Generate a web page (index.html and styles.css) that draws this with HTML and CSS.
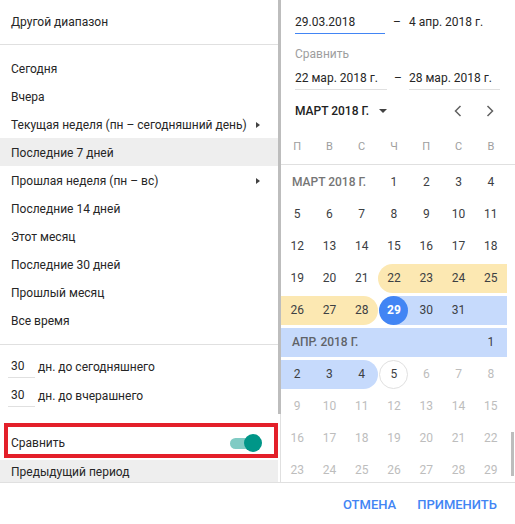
FILE: index.html
```html
<!DOCTYPE html>
<html lang="ru">
<head>
<meta charset="utf-8">
<title>Диапазон дат</title>
<link rel="stylesheet" href="styles.css">
</head>
<body>
<div class="picker">
  <div class="main">
    <aside class="presets">
      <div class="preset-list">
        <div class="custom">Другой диапазон</div>
        <ul class="ranges">
          <li>Сегодня</li>
          <li>Вчера</li>
          <li class="has-sub">Текущая неделя (пн – сегодняшний день)<span class="tri"></span></li>
          <li class="active">Последние 7 дней</li>
          <li class="has-sub">Прошлая неделя (пн – вс)<span class="tri"></span></li>
          <li>Последние 14 дней</li>
          <li>Этот месяц</li>
          <li>Последние 30 дней</li>
          <li>Прошлый месяц</li>
          <li>Все время</li>
        </ul>
        <div class="relative">
          <div class="rel-row"><span class="num">30</span><span>дн. до сегодняшнего</span></div>
          <div class="rel-row"><span class="num">30</span><span>дн. до вчерашнего</span></div>
        </div>
        <div class="compare-box">
          <span>Сравнить</span>
          <span class="toggle"><span class="toggle-track"></span><span class="toggle-knob"></span></span>
        </div>
        <div class="prev">Предыдущий период</div>
      </div>
      <div class="vtrack"><div class="thumb left-thumb"></div></div>
    </aside>

    <section class="cal">
      <div class="date-row">
        <div class="field active-field">29.03.2018</div>
        <div class="dash">–</div>
        <div class="field plain">4 апр. 2018 г.</div>
      </div>
      <div class="cmp-label">Сравнить</div>
      <div class="date-row second">
        <div class="field">22 мар. 2018 г.</div>
        <div class="dash">–</div>
        <div class="field">28 мар. 2018 г.</div>
      </div>
      <div class="month-head">
        <span class="month-name">МАРТ 2018 Г.</span>
        <span class="caret"></span>
        <span class="nav">
          <svg width="8" height="12" viewBox="0 0 8 12"><path d="M6.5 1 L1.5 6 L6.5 11" fill="none" stroke="#616161" stroke-width="1.5"/></svg>
          <svg width="8" height="12" viewBox="0 0 8 12"><path d="M1.5 1 L6.5 6 L1.5 11" fill="none" stroke="#616161" stroke-width="1.5"/></svg>
        </span>
      </div>
      <div class="weekdays">
        <span>П</span><span>В</span><span>С</span><span>Ч</span><span>П</span><span>С</span><span>В</span>
      </div>
      <div class="cal-scroll">
        <div class="grid">
          <span class="mlabel">МАРТ 2018 Г.</span><span>1</span><span>2</span><span>3</span><span>4</span>
          <span>5</span><span>6</span><span>7</span><span>8</span><span>9</span><span>10</span><span>11</span>
          <span>12</span><span>13</span><span>14</span><span>15</span><span>16</span><span>17</span><span>18</span>
          <span>19</span><span>20</span><span>21</span><span class="y y-start">22</span><span class="y">23</span><span class="y">24</span><span class="y">25</span>
          <span class="y">26</span><span class="y">27</span><span class="y y-end">28</span><span class="sel-start"><i>29</i></span><span class="b">30</span><span class="b">31</span><span class="b"></span>
          <span class="mlabel b wide">АПР. 2018 Г.</span><span class="b">1</span>
          <span class="b">2</span><span class="b">3</span><span class="b b-end">4</span><span class="today"><i>5</i></span><span class="f">6</span><span class="f">7</span><span class="f">8</span>
          <span class="f">9</span><span class="f">10</span><span class="f">11</span><span class="f">12</span><span class="f">13</span><span class="f">14</span><span class="f">15</span>
          <span class="f">16</span><span class="f">17</span><span class="f">18</span><span class="f">19</span><span class="f">20</span><span class="f">21</span><span class="f">22</span>
          <span class="f">23</span><span class="f">24</span><span class="f">25</span><span class="f">26</span><span class="f">27</span><span class="f">28</span><span class="f">29</span>
        </div>
        <div class="vscroll"><div class="thumb right-thumb"></div></div>
      </div>
    </section>
  </div>
  <footer class="actions">
    <button class="btn">ОТМЕНА</button>
    <button class="btn">ПРИМЕНИТЬ</button>
  </footer>
</div>
</body>
</html>
```

FILE: styles.css
```css
* { box-sizing: border-box; }
html, body { margin: 0; padding: 0; background: #fff; }
body {
  font-family: Roboto, "Noto Sans", "DejaVu Sans", sans-serif;
  font-size: 12px;
  color: #262626;
}
.picker { width: 515px; height: 524px; display: flex; flex-direction: column; }
.main {
  height: 483px;
  display: flex;
  border-bottom: 1px solid #e0e0e0;
  overflow: hidden;
}

/* left presets */
.presets { width: 281px; display: flex; height: 482px; }
.preset-list { width: 278px; overflow: hidden; }
.vtrack {
  width: 3px;
  border-right: 1px solid #e0e0e0;
  position: relative;
}
.thumb { position: absolute; background: #bdbdbd; }
.left-thumb { left: 0; top: 0; width: 3px; height: 414px; }

.custom {
  height: 45px;
  line-height: 44px;
  padding-left: 11px;
  border-bottom: 1px solid #e0e0e0;
}
.ranges {
  list-style: none;
  margin: 0;
  padding: 9px 0 10px;
  border-bottom: 1px solid #e0e0e0;
}
.ranges li {
  height: 28px;
  line-height: 28px;
  padding: 1px 18px 0 11px;
  display: flex;
  align-items: center;
  justify-content: space-between;
}
.ranges li.active { background: #eeeeee; }
.tri {
  width: 0; height: 0;
  border-left: 4px solid #424242;
  border-top: 3.5px solid transparent;
  border-bottom: 3.5px solid transparent;
}
.relative { padding-top: 7px; }
.rel-row {
  height: 29px;
  display: flex;
  align-items: center;
}
.num {
  width: 27px;
  margin-left: 8px;
  margin-right: 3px;
  padding-left: 3px;
  height: 23px;
  line-height: 22px;
  border-bottom: 1px solid #e0e0e0;
}
.compare-box {
  margin: 13px 0 0 4px;
  width: 274px;
  height: 35px;
  border: 4px solid #e3202a;
  display: flex;
  align-items: center;
  justify-content: space-between;
  padding: 4px 12px 0 3px;
}
.toggle { position: relative; width: 32px; height: 18px; }
.toggle-track {
  position: absolute; left: 0; top: 4px;
  width: 26px; height: 11px; border-radius: 6px;
  background: #80cbc4;
}
.toggle-knob {
  position: absolute; right: 0; top: 0;
  width: 18px; height: 18px; border-radius: 50%;
  background: #009688;
}
.prev {
  margin-top: 2px;
  height: 28px;
  line-height: 24px;
  padding-left: 11px;
  background: #eeeeee;
}

/* calendar side */
.cal { width: 234px; padding-top: 11px; }
.date-row { display: flex; padding-left: 14px; }
.field {
  width: 91px;
  height: 23px;
  line-height: 22px;
  border-bottom: 1px solid #e0e0e0;
  white-space: nowrap;
}
.field.active-field { border-bottom-color: #4285f4; width: 90px; }
.field.plain { border-bottom-color: transparent; }
.dash { width: 24px; text-align: center; line-height: 22px; }
.second .field:first-child { width: 92px; }
.second .dash { width: 22px; }
.cmp-label {
  padding-left: 14px;
  margin-top: 12px;
  line-height: 16px;
  color: #9e9e9e;
}
.date-row.second { margin-top: 5px; }
.month-head {
  margin-top: 9px;
  height: 24px;
  display: flex;
  align-items: center;
  padding-left: 14px;
}
.month-name { font-weight: 500; color: #212121; }
.caret {
  margin-left: 10px;
  width: 0; height: 0;
  border-top: 4px solid #424242;
  border-left: 4px solid transparent;
  border-right: 4px solid transparent;
}
.nav {
  margin-left: auto;
  display: flex;
  gap: 24px;
  padding-right: 21px;
}
.nav svg { display: block; }
.weekdays {
  margin-top: 8px;
  width: 226px;
  display: grid;
  grid-template-columns: repeat(7, 1fr);
  height: 34px;
  line-height: 32px;
  text-align: center;
  color: #9e9e9e;
  font-size: 11px;
  position: relative;
}
.weekdays::after {
  content: "";
  position: absolute;
  left: 0; bottom: 0;
  width: 234px; height: 1px;
  background: #e0e0e0;
}
.cal-scroll { display: flex; height: 317px; overflow: hidden; }
.grid {
  width: 226px;
  display: grid;
  grid-template-columns: repeat(7, 1fr);
  grid-auto-rows: 29px;
  row-gap: 3px;
  padding-top: 3px;
  align-content: start;
}
.grid span {
  line-height: 29px;
  text-align: center;
  color: #3c4043;
}
.grid .mlabel {
  grid-column: span 3;
  text-align: left;
  padding-left: 11px;
  font-weight: 500;
  color: #757575;
}
.grid .mlabel.wide { grid-column: span 6; color: #5f6368; }
.grid .y { background: #fce8b2; }
.grid .y-start { border-radius: 14.5px 0 0 14.5px; }
.grid .y-end { border-radius: 0 14.5px 14.5px 0; }
.grid .b { background: #c6dafc; }
.grid .b-end { border-radius: 0 14.5px 14.5px 0; }
.grid .sel-start {
  background: linear-gradient(to right, transparent 50%, #c6dafc 50%);
  display: flex;
  justify-content: center;
}
.grid .sel-start i {
  font-style: normal;
  width: 29px; height: 29px;
  border-radius: 50%;
  background: #4285f4;
  color: #fff;
  font-weight: 700;
  line-height: 29px;
}
.grid .today { display: flex; justify-content: center; }
.grid .today i {
  font-style: normal;
  width: 29px; height: 29px;
  border-radius: 50%;
  border: 1px solid #e0e0e0;
  line-height: 27px;
  color: #3c4043;
}
.grid .f { color: #bdbdbd; }
.vscroll { width: 8px; position: relative; }
.right-thumb { right: 1px; top: 267px; width: 3px; height: 44px; }

/* footer */
.actions {
  flex: 1;
  display: flex;
  justify-content: flex-end;
  align-items: center;
  gap: 21px;
  padding-right: 18px;
  padding-top: 1px;
}
.btn {
  border: 0;
  background: none;
  padding: 0;
  font-family: Roboto, "Noto Sans", sans-serif;
  font-size: 13px;
  font-weight: 500;
  color: #4285f4;
}
```
